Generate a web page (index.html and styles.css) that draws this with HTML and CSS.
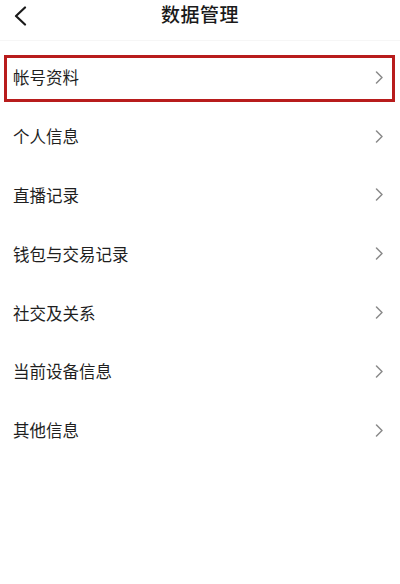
FILE: index.html
```html
<!DOCTYPE html>
<html lang="zh-CN">
<head>
<meta charset="utf-8">
<title>数据管理</title>
<link rel="stylesheet" href="styles.css">
</head>
<body>
<div class="page">
  <header class="nav">
    <span class="back">
      <svg width="14" height="20" viewBox="0 0 14 20"><path d="M12 1.5 L3 10 L12 18.5" fill="none" stroke="#1a1a1a" stroke-width="2.2" stroke-linecap="round" stroke-linejoin="round"/></svg>
    </span>
    <h1 class="title">数据管理</h1>
  </header>
  <ul class="list">
    <li class="row row-marked"><span class="label">帐号资料</span><svg class="chev" width="9" height="13" viewBox="0 0 9 13"><path d="M1.5 1 L7 6.5 L1.5 12" fill="none" stroke="#8a8a8a" stroke-width="1.5" stroke-linecap="round" stroke-linejoin="round"/></svg></li>
    <li class="row"><span class="label">个人信息</span><svg class="chev" width="9" height="13" viewBox="0 0 9 13"><path d="M1.5 1 L7 6.5 L1.5 12" fill="none" stroke="#8a8a8a" stroke-width="1.5" stroke-linecap="round" stroke-linejoin="round"/></svg></li>
    <li class="row"><span class="label">直播记录</span><svg class="chev" width="9" height="13" viewBox="0 0 9 13"><path d="M1.5 1 L7 6.5 L1.5 12" fill="none" stroke="#8a8a8a" stroke-width="1.5" stroke-linecap="round" stroke-linejoin="round"/></svg></li>
    <li class="row"><span class="label">钱包与交易记录</span><svg class="chev" width="9" height="13" viewBox="0 0 9 13"><path d="M1.5 1 L7 6.5 L1.5 12" fill="none" stroke="#8a8a8a" stroke-width="1.5" stroke-linecap="round" stroke-linejoin="round"/></svg></li>
    <li class="row"><span class="label">社交及关系</span><svg class="chev" width="9" height="13" viewBox="0 0 9 13"><path d="M1.5 1 L7 6.5 L1.5 12" fill="none" stroke="#8a8a8a" stroke-width="1.5" stroke-linecap="round" stroke-linejoin="round"/></svg></li>
    <li class="row"><span class="label">当前设备信息</span><svg class="chev" width="9" height="13" viewBox="0 0 9 13"><path d="M1.5 1 L7 6.5 L1.5 12" fill="none" stroke="#8a8a8a" stroke-width="1.5" stroke-linecap="round" stroke-linejoin="round"/></svg></li>
    <li class="row"><span class="label">其他信息</span><svg class="chev" width="9" height="13" viewBox="0 0 9 13"><path d="M1.5 1 L7 6.5 L1.5 12" fill="none" stroke="#8a8a8a" stroke-width="1.5" stroke-linecap="round" stroke-linejoin="round"/></svg></li>
  </ul>
</div>
</body>
</html>
```
FILE: styles.css
```css
* { box-sizing: border-box; }
html, body {
  margin: 0;
  padding: 0;
  background: #ffffff;
}
body {
  font-family: "Noto Sans CJK SC", "Noto Sans", sans-serif;
  color: #222222;
}
.page {
  width: 400px;
  height: 584px;
  overflow: hidden;
}
.nav {
  position: relative;
  height: 41px;
  display: flex;
  align-items: flex-start;
  justify-content: center;
  border-bottom: 1px solid #f6f6f6;
}
.back {
  position: absolute;
  left: 13px;
  top: 6px;
  display: flex;
}
.title {
  margin: 0;
  font-size: 19px;
  line-height: 28px;
  font-weight: 500;
  color: #1a1a1a;
  letter-spacing: 0.5px;
}
.list {
  list-style: none;
  margin: 7px 0 0;
  padding: 0;
}
.row {
  position: relative;
  height: 58.8px;
  display: flex;
  align-items: center;
  justify-content: space-between;
  padding: 0 16px 0 13px;
}
.label {
  font-size: 16.5px;
  color: #1f1f1f;
}
.chev {
  display: block;
}
.row-marked::after {
  content: "";
  position: absolute;
  left: 4px;
  right: 5px;
  top: 7px;
  bottom: 5px;
  border: 3.5px solid #b81c1c;
}
```
